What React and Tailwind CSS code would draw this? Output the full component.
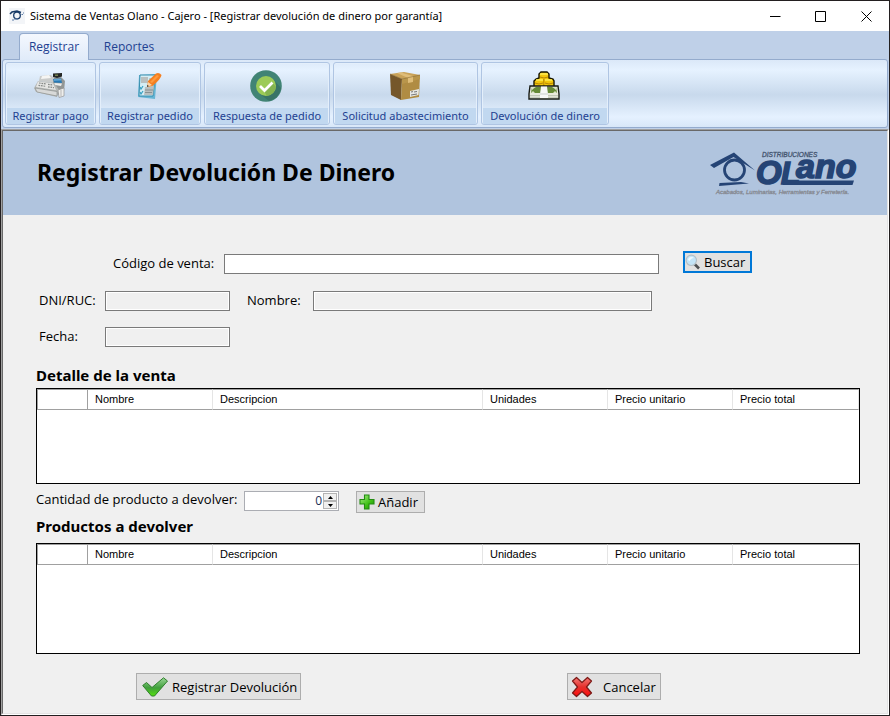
import React, { useState } from "react";

const SANS = "font-['Open_Sans','Noto_Sans',sans-serif]";

function AppIcon() {
  return (
    <svg viewBox="0 0 16 16" className="h-4 w-4 shrink-0 bg-[#f3f5f8]" aria-hidden="true">
      <path d="M1 6 L3 4 L8 3 L12 4.500" fill="none" stroke="#173a66" strokeWidth="1.600" />
      <circle cx="8" cy="7.500" r="3.300" fill="none" stroke="#173a66" strokeWidth="1.300" />
      <path d="M3 12 H5 M5 11 H9 M12.500 6.500 H14 M14 5 H15" stroke="#5a7ba5" strokeWidth="1.200" />
    </svg>
  );
}

function RegisterIcon() {
  return (
    <svg viewBox="0 0 32 32" className="h-8 w-8" aria-hidden="true">
      <path d="M17 8 L27 7 L31 11 L30 21 L24 25 L18 18z" fill="#929695" />
      <path d="M6 6 L17 5 L20 8 L19 13 L5 11z" fill="#c9cbca" />
      <path d="M8 6 L15 5 L17 8 L7 9z" fill="#f5f5f3" />
      <path d="M19 3.500 L28 3 L28 6.500 L23 8 L19 7z" fill="#252725" />
      <path d="M21 4.500 H24 V6 H21z" fill="#72804d" />
      <path d="M19 9 L27 8.500 L28 13 L20 12.500z" fill="#2779b5" />
      <path d="M20 10 L27 9.800" stroke="#89c2e8" />
      <path d="M20 13 L28 13.500 L27 16 L21 15z" fill="#eeeeec" />
      <path d="M4 11 L20 13 L25 20 L23 27 L2 22 L0 18z" fill="#b4b7b5" />
      <path d="M4 11.500 L19 13.500 L22 20 L2 17z" fill="#e6e6e4" />
      <path d="M5 13 L12 14 M14 14.400 L19 15 M4.500 15.300 L12 16.400 M14 16.800 L20 17.700" stroke="#858986" strokeWidth="1.200" strokeDasharray="1.700 .8" />
      <path d="M1 18 L23 21.500 L23 26 L3 22z" fill="#d8d9d8" stroke="#858886" strokeWidth=".6" />
      <path d="M24 20 L30 18 L30 26 L25 27.500z" fill="#eeeeec" stroke="#888" strokeWidth=".6" />
      <path d="M27 20 V26.500" stroke="#b6b6b6" />
    </svg>
  );
}

function OrderIcon() {
  return (
    <svg viewBox="0 0 32 32" className="h-8 w-8" aria-hidden="true">
      <path d="M6 5 L24 4 L22 29 L5 27z" fill="#66b5d4" />
      <path d="M7 5 L22 5 L20 26 L6 26z" fill="#d4edf5" stroke="#398eae" strokeWidth="1" />
      <path d="M8 7 H15 V13 H8z M12 17 L21 16 L20 25 H11z" fill="#b9bfbf" />
      <path d="M16 9 H20 M16 12 H20" stroke="#8ba3aa" />
      <path d="M7 17 L8 19 L10 16 M7 22 L8 24 L10 21" fill="none" stroke="#37a0c2" strokeWidth="1.200" />
      <path d="M12 20 H20 M12 22.500 H19" stroke="#899193" />
      <path d="M15 11 L23 3.500 Q26 2 28.500 5 Q28 9 19.500 16 L14 17z" fill="#f47f20" />
      <path d="M17 12 L24 5 L26 6 L19 13z" fill="#ff9a3d" />
      <path d="M15 12 L19 15 L14 17z" fill="#f5d4aa" />
      <path d="M14 15 L16 16 L14 17z" fill="#333" />
    </svg>
  );
}

function ApprovedIcon() {
  return (
    <svg viewBox="0 0 32 32" className="h-8 w-8" aria-hidden="true">
      <circle cx="16" cy="16" r="15.800" fill="#418475" />
      <path d="M23 9 L31 18 Q29 29 19 31 L10 24z" fill="#397467" />
      <circle cx="16" cy="16" r="10" fill="#9ccb57" />
      <path d="M22 12 L26 17 Q24 25 17 26 L14 21z" fill="#84b450" />
      <path d="M10 16 L14.500 20.500 L22.500 12.500" fill="none" stroke="#fff" strokeWidth="2.700" />
    </svg>
  );
}

function BoxIcon() {
  return (
    <svg viewBox="0 0 32 32" className="h-8 w-8" aria-hidden="true">
      <path d="M1 4 L15 2 L31 5 L13 9z" fill="#c9a258" />
      <path d="M1 4 L13 9 L12 30 L2 25z" fill="#75572a" />
      <path d="M13 9 L31 5 L30 27 L12 30z" fill="#b08c43" />
      <path d="M13 9 L31 5 L31 9 L13 14z" fill="#b9964c" />
      <path d="M8 3 L12 2.500 L24 6 L24 12 L19 13 L19 8z" fill="#dfbd79" />
      <path d="M21 21 L30 19 L29.500 25 L21 27z" fill="#e7e8e5" />
      <path d="M22 22 L24 21.600 M25 22 L28 21.500 M22 25 L28 24" stroke="#777" strokeWidth="1" />
      <path d="M1 4 L13 9 L31 5" fill="none" stroke="#8b6b32" strokeWidth=".6" />
    </svg>
  );
}

function MoneyIcon() {
  return (
    <svg viewBox="0 0 32 32" className="h-8 w-8" aria-hidden="true">
      <path d="M11 8 V4 L13 2 H19 L21 4 V8 L25 9 L26 11 V18 H6 V11 L8 9z" fill="#f3c70c" stroke="#161400" strokeWidth="1.400" />
      <path d="M12 4 H20 M8 10 H15 M17 10 H24" stroke="#ffed54" strokeWidth="1.300" />
      <path d="M12 7 Q16 9 20 7 M7 13 Q11 15 15 13 M17 13 Q21 15 25 13 M15.800 9 V17" fill="none" stroke="#b58507" strokeWidth="1" />
      <path d="M2 16 H30 L31 24 V29 H1 V24z" fill="#e9eadd" stroke="#171b14" strokeWidth="1.400" />
      <path d="M4 17 H28 L29 23 H3z" fill="#668a36" />
      <path d="M4 20 Q6 18 8 17 H4z M28 20 Q26 18 24 17 H28z M3 23 L5 21 L7 23z M29 23 L27 21 L25 23z" fill="#dce3c9" />
      <path d="M2 25.500 H30 M2 27.300 H30" stroke="#b7bfae" strokeWidth=".8" />
      <path d="M13 16.500 H19 L20 24 V28 H12 V24z" fill="#f7f8f8" />
      <path d="M12 24 H20" stroke="#c9cecd" />
    </svg>
  );
}

function SearchIcon() {
  return (
    <svg viewBox="0 0 16 16" className="h-4 w-4 shrink-0" aria-hidden="true">
      <path d="M9.500 10 L14 14.500" stroke="#4d5052" strokeWidth="2.600" />
      <circle cx="6.300" cy="6.300" r="5.200" fill="#c3e4f7" stroke="#b5c0c7" strokeWidth="1.200" />
      <path d="M3 6 Q3.500 3 6.500 3 Q8 3 9 4 Q6 4 4.500 7z" fill="#f0faff" />
    </svg>
  );
}

function AddIcon() {
  return (
    <svg viewBox="0 0 16 16" className="h-4 w-4 shrink-0" aria-hidden="true">
      <defs>
        <linearGradient id="plus" x1="0" y1="0" x2="1" y2="1">
          <stop offset="0" stopColor="#a8ee87" />
          <stop offset=".6" stopColor="#3fc016" />
          <stop offset="1" stopColor="#1b8b08" />
        </linearGradient>
      </defs>
      <path d="M5.500 1 H10 V5.500 H15 V10 H10 V15 H5.500 V10 H1 V5.500 H5.500z" fill="url(#plus)" stroke="#238c12" strokeWidth="1.100" />
    </svg>
  );
}

function CheckIcon() {
  return (
    <svg viewBox="0 0 26 20" className="h-5 w-[26px] shrink-0" aria-hidden="true">
      <defs>
        <linearGradient id="tick" x1="0" y1="0" x2="0" y2="1">
          <stop offset="0" stopColor="#9ad796" />
          <stop offset=".55" stopColor="#3f9e3b" />
          <stop offset="1" stopColor="#55e010" />
        </linearGradient>
      </defs>
      <path d="M.7 8.500 L4.500 5.500 L10 10.500 L21.500 .8 L25.500 4 L12.500 19 H9.500z" fill="url(#tick)" stroke="#2e7f2b" strokeWidth="1" strokeLinejoin="round" />
    </svg>
  );
}

function CrossIcon() {
  return (
    <svg viewBox="0 0 22 22" className="h-[22px] w-[22px] shrink-0" aria-hidden="true">
      <defs>
        <linearGradient id="cross" x1="0" y1="0" x2="0" y2="1">
          <stop offset="0" stopColor="#f47a76" />
          <stop offset=".5" stopColor="#e5302c" />
          <stop offset="1" stopColor="#ff0c0c" />
        </linearGradient>
      </defs>
      <path d="M5.500 1.500 L11 6.500 L16.500 1.500 L20.500 5 L15.500 11 L20.500 17 L16.500 20.500 L11 15.500 L5.500 20.500 L1.500 17 L6.500 11 L1.500 5z" fill="url(#cross)" stroke="#7c1815" strokeWidth="1.200" strokeLinejoin="round" />
    </svg>
  );
}

function OlanoLogo() {
  return (
    <svg viewBox="706 146 152 52" className="h-[52px] w-[152px] shrink-0" role="img" aria-label="Distribuciones Olano">
      <path d="M709 165 L733 152.500 L754 170.500 L732.500 157 L713 168z" fill="#254475" />
      <circle cx="733.500" cy="170" r="10" fill="none" stroke="#254475" strokeWidth="2.800" />
      <path d="M718.500 183 L740 182 L748 183.500 L718 186z" fill="#254475" />
      <text x="761" y="157" fontSize="6.500" fontStyle="italic" fill="#44546f" stroke="#44546f" strokeWidth=".3" fontFamily="Liberation Sans, sans-serif">DISTRIBUCIONES</text>
      <text y="184" fill="#254475" stroke="#254475" strokeWidth="1.600" fontStyle="italic" fontWeight="700" fontFamily="Liberation Sans, sans-serif">
        <tspan x="755" fontSize="33">O</tspan>
        <tspan x="780" fontSize="31">L</tspan>
        <tspan x="795" y="178" fontSize="34">ano</tspan>
      </text>
      <path d="M783 180.500 H853 L851.500 185 H781.500z" fill="#254475" />
      <text x="715" y="194" fontSize="6" fontStyle="italic" fill="#858890" stroke="#858890" strokeWidth=".3" fontFamily="Liberation Sans, sans-serif">Acabados, Luminarias, Herramientas y Ferretería.</text>
    </svg>
  );
}

const ACTIONS = [
  { label: "Registrar pago", Icon: RegisterIcon, width: "w-[91px]" },
  { label: "Registrar pedido", Icon: OrderIcon, width: "w-[102px]" },
  { label: "Respuesta de pedido", Icon: ApprovedIcon, width: "w-[126px]" },
  { label: "Solicitud abastecimiento", Icon: BoxIcon, width: "w-[145px]" },
  { label: "Devolución de dinero", Icon: MoneyIcon, width: "w-[128px]" },
];

function TitleBar() {
  return (
    <header className="flex h-[30px] items-center bg-white pl-2">
      <AppIcon />
      <h1 className="ml-[5px] flex-1 font-['Noto_Sans',sans-serif] text-[11px] whitespace-nowrap text-black">
        Sistema de Ventas Olano - Cajero - [Registrar devolución de dinero por garantía]
      </h1>
      <button type="button" aria-label="Minimizar" className="flex h-full w-[46px] items-center justify-center">
        <svg viewBox="0 0 11 11" className="h-[11px] w-[11px]"><path d="M0 5.500 H10.500" stroke="#000" /></svg>
      </button>
      <button type="button" aria-label="Maximizar" className="flex h-full w-[45px] items-center justify-center">
        <svg viewBox="0 0 11 11" className="h-[11px] w-[11px]"><path d="M.5 .5 H10.500 V10.500 H.5z" fill="none" stroke="#000" /></svg>
      </button>
      <button type="button" aria-label="Cerrar" className="flex h-full w-[46px] items-center justify-center">
        <svg viewBox="0 0 11 11" className="h-[11px] w-[11px]"><path d="M.5 .5 L10.500 10.500 M10.500 .5 L.5 10.500" stroke="#000" /></svg>
      </button>
    </header>
  );
}

function Ribbon() {
  return (
    <nav className="bg-[#bfd0e8] px-px pb-px text-[#1e4191]">
      <div className="flex h-7 items-end pl-[17px] text-[12px]">
        <button type="button" className="-mb-px h-[27px] w-[70px] rounded-t-[4px] border border-b-0 border-[#94abcd] bg-linear-to-b from-[#f4f8fe] to-[#e0ebf9]">
          Registrar
        </button>
        <button type="button" className="h-[26px] w-20 pt-px">Reportes</button>
      </div>
      <div className="flex gap-[3px] rounded-[3px] border border-[#94abcd] p-[2px] [background-image:linear-gradient(#dbe8f8,#e6f2ff_15%,#c8d9ec_52%,#e5f1ff_85%,#d8e7f8)]">
        {ACTIONS.map(({ label, Icon, width }) => (
          <button
            key={label}
            type="button"
            className={`${width} flex h-[63px] shrink-0 flex-col items-center overflow-hidden rounded-[3px] border border-[#afc5e3] px-px pt-[7px] shadow-[inset_0_0_0_1px_#e4effb]`}
          >
            <span className="pr-[2px]"><Icon /></span>
            <span className="mt-auto flex h-4 w-full items-center justify-center bg-[#c1d8f0] font-['Noto_Sans',sans-serif] text-[11px] whitespace-nowrap">{label}</span>
          </button>
        ))}
      </div>
    </nav>
  );
}

function SalesTable({ label, height }) {
  const cell = "border-r border-[#e5e5e5] pl-[7px] text-left font-normal";
  return (
    <div className={`${height} border border-black bg-white`}>
      <table aria-label={label} className="w-full table-fixed border-separate border-spacing-0 font-['Liberation_Sans',Arial,sans-serif] text-[11px] text-black">
        <thead>
          <tr className="h-[21px] [&>th]:border-t [&>th]:border-b [&>th]:border-t-[#a0a0a0] [&>th]:border-b-[#a0a0a0]">
            <td className="w-[51px] border border-[#a0a0a0]"></td>
            <th className={`${cell} w-[125px]`}>Nombre</th>
            <th className={cell}>Descripcion</th>
            <th className={`${cell} w-[125px]`}>Unidades</th>
            <th className={`${cell} w-[125px]`}>Precio unitario</th>
            <th className={`${cell} w-[126px]`}>Precio total</th>
          </tr>
        </thead>
        <tbody></tbody>
      </table>
    </div>
  );
}

const READ_ONLY = "h-5 border border-[#7a7a7a] bg-[#f0f0f0] px-1 shadow-[inset_0_0_0_1px_#fff]";
const BUTTON = "flex items-center border border-[#adadad] bg-[#e1e1e1] whitespace-nowrap";
const HEADING = "font-['Noto_Sans',sans-serif] text-[15px] leading-6 font-bold";

function ReturnForm() {
  const [amount, setAmount] = useState(0);
  return (
    <form className="flex-1 bg-[#f0f0f0] pt-9 pr-[27px] pb-3 pl-[33px] text-[13px] text-black" onSubmit={(e) => e.preventDefault()}>
      <div className="flex h-[22px] items-center pr-[108px] pl-[77px]">
        <label htmlFor="codigo" className="w-[111px] pt-1">Código de venta:</label>
        <input id="codigo" type="text" className="mt-1 h-5 min-w-0 flex-1 border border-[#7a7a7a] bg-white px-1" />
        <button type="submit" className="ml-6 flex h-[22px] w-[69px] items-center border-2 border-[#0078d7] bg-[#e1e1e1]">
          <SearchIcon />
          <span className="ml-[3px] pt-[2px]">Buscar</span>
        </button>
      </div>
      <div className="mt-[18px] flex h-5 items-center pr-[208px] pl-[3px]">
        <label htmlFor="dni" className="w-[66px]">DNI/RUC:</label>
        <input id="dni" type="text" readOnly className={`${READ_ONLY} w-[125px]`} />
        <label htmlFor="nombre" className="ml-[17px] w-[66px]">Nombre:</label>
        <input id="nombre" type="text" readOnly className={`${READ_ONLY} min-w-0 flex-1`} />
      </div>
      <div className="mt-4 flex h-5 items-center pl-[3px]">
        <label htmlFor="fecha" className="w-[66px]">Fecha:</label>
        <input id="fecha" type="text" readOnly className={`${READ_ONLY} w-[125px]`} />
      </div>

      <h3 className={`${HEADING} mt-4 mb-px`}>Detalle de la venta</h3>
      <SalesTable label="Detalle de la venta" height="h-24" />

      <div className="mt-[7px] flex h-[22px] items-start">
        <label htmlFor="cantidad" className="w-[208px] leading-4">Cantidad de producto a devolver:</label>
        <div className="flex h-5 w-[95px] border border-[#abadb3] bg-white p-px">
          <input
            id="cantidad"
            type="number"
            min="0"
            value={amount}
            onChange={(e) => setAmount(Number(e.target.value))}
            className="min-w-0 flex-1 [appearance:textfield] pr-px text-right text-[12px] leading-4 text-[#1b3157] outline-none [&::-webkit-inner-spin-button]:appearance-none"
          />
          <div className="flex w-[14px] flex-col">
            <button type="button" aria-label="Aumentar" onClick={() => setAmount(amount + 1)} className="flex flex-1 items-center justify-center border border-[#b4b4b4] bg-[#f0f0f0]">
              <svg viewBox="0 0 5 3" className="h-[3px] w-[5px]"><path d="M0 3 L2.500 0 L5 3z" /></svg>
            </button>
            <button type="button" aria-label="Disminuir" onClick={() => setAmount(Math.max(0, amount - 1))} className="flex flex-1 items-center justify-center border border-[#b4b4b4] bg-[#f0f0f0]">
              <svg viewBox="0 0 5 3" className="h-[3px] w-[5px]"><path d="M0 0 L2.500 3 L5 0z" /></svg>
            </button>
          </div>
        </div>
        <button type="button" className={`${BUTTON} ml-[17px] h-[22px] w-[69px] pl-[2px]`}>
          <AddIcon />
          <span className="ml-[3px] pt-[2px]">Añadir</span>
        </button>
      </div>

      <h3 className={`${HEADING} mt-px mb-[5px]`}>Productos a devolver</h3>
      <SalesTable label="Productos a devolver" height="h-[111px]" />

      <div className="mt-[19px] flex justify-between pr-[199px] pl-[100px]">
        <button type="submit" className={`${BUTTON} h-[27px] w-[165px] pl-[5px]`}>
          <CheckIcon />
          <span className="ml-1 pt-[2px]">Registrar Devolución</span>
        </button>
        <button type="button" className={`${BUTTON} h-[27px] w-[94px] pl-[3px]`}>
          <CrossIcon />
          <span className="ml-[10px] pt-[2px]">Cancelar</span>
        </button>
      </div>
    </form>
  );
}

export default function App() {
  return (
    <div className={`flex min-h-screen flex-col border border-[#231f20] bg-white ${SANS}`}>
      <TitleBar />
      <Ribbon />
      <div className="flex flex-1 flex-col border border-t-[#a0a0a0] border-r-white border-b-white border-l-[#a0a0a0]">
        <main className="flex flex-1 flex-col border border-t-[#696969] border-r-[#e3e3e3] border-b-[#e3e3e3] border-l-[#696969]">
          <div className="flex h-[84px] items-center justify-between bg-[#b0c4de] pr-7 pb-[2px] pl-[34px]">
            <h2 className="font-['Noto_Sans',sans-serif] text-[23px] leading-8 font-bold whitespace-nowrap text-black">Registrar Devolución De Dinero</h2>
            <OlanoLogo />
          </div>
          <ReturnForm />
        </main>
      </div>
    </div>
  );
}
